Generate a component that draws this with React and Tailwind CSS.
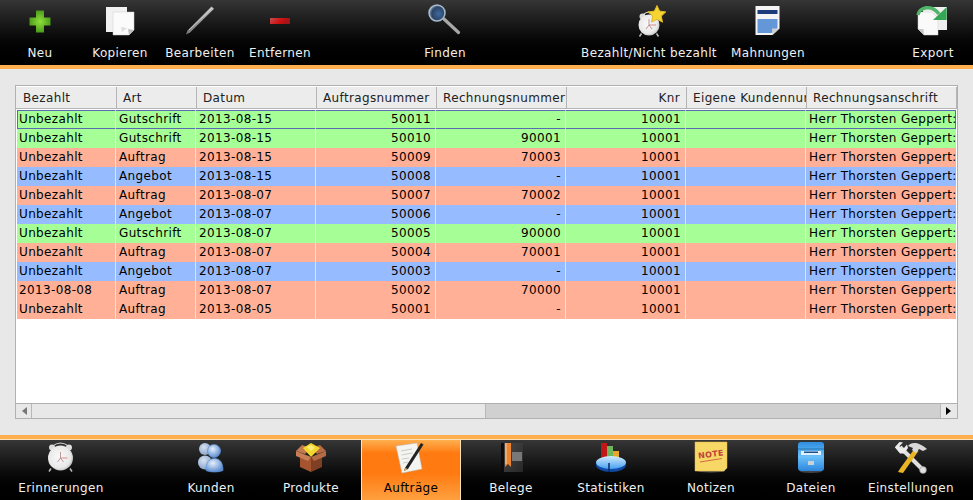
import React from "react";

const columns = [
  { name: "Bezahlt", width: "w-[100px]", rowWidth: "w-[99px]" },
  { name: "Art", width: "w-[80px]" },
  { name: "Datum", width: "w-[120px]" },
  { name: "Auftragsnummer", width: "w-[120px]", right: true },
  { name: "Rechnungsnummer", width: "w-[130px]", right: true },
  { name: "Knr", width: "w-[120px]", right: true, headRight: true },
  { name: "Eigene Kundennummer", width: "w-[120px]" },
  { name: "Rechnungsanschrift", width: "flex-1" },
];

const address = "Herr Thorsten Geppert:";

const rows = [
  ["Unbezahlt", "Gutschrift", "2013-08-15", "50011", "-"],
  ["Unbezahlt", "Gutschrift", "2013-08-15", "50010", "90001"],
  ["Unbezahlt", "Auftrag", "2013-08-15", "50009", "70003"],
  ["Unbezahlt", "Angebot", "2013-08-15", "50008", "-"],
  ["Unbezahlt", "Auftrag", "2013-08-07", "50007", "70002"],
  ["Unbezahlt", "Angebot", "2013-08-07", "50006", "-"],
  ["Unbezahlt", "Gutschrift", "2013-08-07", "50005", "90000"],
  ["Unbezahlt", "Auftrag", "2013-08-07", "50004", "70001"],
  ["Unbezahlt", "Angebot", "2013-08-07", "50003", "-"],
  ["2013-08-08", "Auftrag", "2013-08-07", "50002", "70000"],
  ["Unbezahlt", "Auftrag", "2013-08-05", "50001", "-"],
];

const rowColors = {
  Gutschrift: "bg-[#a6ff96]",
  Auftrag: "bg-[#ffb096]",
  Angebot: "bg-[#96bcff]",
};

function Icon({ children }) {
  return (
    <svg width="36" height="36" viewBox="0 0 36 36" className="block shrink-0">
      {children}
    </svg>
  );
}

function PlusIcon() {
  return (
    <Icon>
      <defs>
        <radialGradient id="plusG" cx="0.5" cy="0.5" r="0.6">
          <stop offset="0" stopColor="#8fe03a" />
          <stop offset="1" stopColor="#3f8f16" />
        </radialGradient>
      </defs>
      <path d="M14 7.5h8v7h6.5v8H22v7h-8v-7H7.5v-8H14z" fill="url(#plusG)" />
    </Icon>
  );
}

function CopyIcon() {
  return (
    <Icon>
      <path d="M4 4h21v25H4z" fill="#f1f1f1" />
      <path d="M11 9h21v18l-5 5H11z" fill="#fbfbfb" stroke="#cfcfcf" strokeWidth="0.5" />
      <path d="M27 32l-1-6 6 1z" fill="#bdbdbd" />
      <path d="M20 29l-1-5 6 1z" fill="#dedede" />
    </Icon>
  );
}

function PenIcon() {
  return (
    <Icon>
      <defs>
        <linearGradient id="penG" x1="0" y1="1" x2="1" y2="0">
          <stop offset="0" stopColor="#777" />
          <stop offset="1" stopColor="#c4c4c4" />
        </linearGradient>
      </defs>
      <path d="M4 31.5l1.5-4L29.5 3.5 32 5.8 8 29.5z" fill="url(#penG)" />
      <path d="M7 27L30 5" stroke="#e4e4e4" strokeWidth="0.7" />
    </Icon>
  );
}

function MinusIcon() {
  return (
    <Icon>
      <defs>
        <linearGradient id="minusG" x1="0" y1="0" x2="1" y2="0.3">
          <stop offset="0" stopColor="#c25050" />
          <stop offset="0.6" stopColor="#d01010" />
          <stop offset="1" stopColor="#a01515" />
        </linearGradient>
      </defs>
      <rect x="8" y="15" width="20" height="6" fill="url(#minusG)" />
    </Icon>
  );
}

function SearchIcon() {
  return (
    <Icon>
      <defs>
        <radialGradient id="lensG" cx="0.6" cy="0.55" r="0.6">
          <stop offset="0" stopColor="#3f6a9c" />
          <stop offset="0.7" stopColor="#2c4468" />
          <stop offset="1" stopColor="#8fa6bd" />
        </radialGradient>
      </defs>
      <path d="M17 16l14.5 13.5" stroke="#a8a8a8" strokeWidth="3.2" strokeLinecap="round" />
      <circle cx="10" cy="10" r="8" fill="url(#lensG)" stroke="#a9bccb" strokeWidth="1.5" />
    </Icon>
  );
}

function ClockBody({ id, cx, cy, r }) {
  const arcY = cy - r + 2;
  return (
    <>
      <defs>
        <radialGradient id={id} cx="0.45" cy="0.45" r="0.6">
          <stop offset="0" stopColor="#fafafa" />
          <stop offset="0.75" stopColor="#e8e8e8" />
          <stop offset="1" stopColor="#b4b4b4" />
        </radialGradient>
      </defs>
      <path
        d={`M${cx - r + 4} ${arcY}Q${cx} ${arcY - 7} ${cx + r - 4} ${arcY}`}
        fill="none"
        stroke="#d8d8d8"
        strokeWidth="1.2"
      />
      <circle cx={cx - r + 4} cy={arcY + 1} r="3" fill="#dcdcdc" />
      <circle cx={cx + r - 4} cy={arcY + 1} r="3" fill="#dcdcdc" />
      <path d={`M${cx - r + 3} ${cy + r - 1}l-2 3M${cx + r - 3} ${cy + r - 1}l2 3`} stroke="#bbb" strokeWidth="1.5" />
      <circle cx={cx} cy={cy + 1} r={r} fill={`url(#${id})`} />
      <path
        d={`M${cx} ${cy + 1}v-6M${cx} ${cy + 1}l-3 4M${cx} ${cy + 1}l3 4`}
        stroke="#a67070"
        strokeWidth="0.7"
        fill="none"
      />
      <path d={`M${cx} ${cy + 1}h7`} stroke="#d06060" strokeWidth="0.7" />
    </>
  );
}

function PaidIcon() {
  return (
    <Icon>
      <ClockBody id="paidClock" cx={18} cy={21} r={10.5} />
      <path
        d="M26 2.5l2.6 5.6 6.2.8-4.5 4.2 1.2 6.1-5.5-3-5.5 3 1.2-6.1-4.5-4.2 6.2-.8z"
        fill="#f6d531"
        stroke="#e0b828"
        strokeWidth="1"
        strokeLinejoin="round"
      />
    </Icon>
  );
}

function DunningIcon() {
  return (
    <Icon>
      <path d="M5.5 3h24v22.5L22.5 32h-17z" fill="#f4f4f4" />
      <rect x="7.5" y="7" width="20" height="4" fill="#1d3a7a" />
      <path d="M7.5 16h20v9l-6 5h-14z" fill="#6497d8" />
      <path d="M22.5 32l-.5-6.5h7.5z" fill="#d0d0d0" />
    </Icon>
  );
}

function ExportIcon() {
  return (
    <Icon>
      <rect x="8" y="4" width="24" height="23" fill="#efefef" />
      <path d="M3 9h14l6 6v17H9l-6-6z" fill="#fafafa" stroke="#cfcfcf" strokeWidth="0.5" />
      <path d="M9 32l-.5-6H3z" fill="#c8c8c8" />
      <path d="M3 12C4 4 17 1 24 11" fill="none" stroke="#4fb56a" strokeWidth="3.5" />
      <path d="M31.7 4v13H18z" fill="#35a653" />
    </Icon>
  );
}

function AlarmIcon() {
  return (
    <Icon>
      <ClockBody id="alarmClock" cx={17.5} cy={17} r={12.5} />
    </Icon>
  );
}

function CustomersIcon() {
  return (
    <Icon>
      <defs>
        <radialGradient id="userG" cx="0.4" cy="0.35" r="0.7">
          <stop offset="0" stopColor="#e6effc" />
          <stop offset="1" stopColor="#5487cc" />
        </radialGradient>
        <radialGradient id="userB" cx="0.4" cy="0.35" r="0.75">
          <stop offset="0" stopColor="#d6e2f2" />
          <stop offset="1" stopColor="#7f9cc4" />
        </radialGradient>
      </defs>
      <circle cx="12" cy="9" r="6" fill="url(#userB)" />
      <ellipse cx="12" cy="22.5" rx="7" ry="7" fill="url(#userB)" />
      <circle cx="21" cy="11" r="6.5" fill="url(#userG)" stroke="#5f90d4" strokeWidth="0.7" />
      <path d="M13 30.5c0-8 3-12 8.5-12s8.5 4 8.5 12c-5 2-12 2-17 0z" fill="url(#userG)" stroke="#5f90d4" strokeWidth="0.7" />
    </Icon>
  );
}

function ProductsIcon() {
  return (
    <Icon>
      <path d="M18 8l9-3 6 6-9 3z" fill="#b86a42" />
      <path d="M18 8L9 5 3 11l9 3z" fill="#c47a50" />
      <path d="M10 8l8-5 9 5-9 9z" fill="#f3d62b" />
      <path d="M14 7l4-2 4 3-4 3z" fill="#fbee78" />
      <path d="M7 15l11 3v14L7 27z" fill="#a4552f" />
      <path d="M29 15l-11 3v14l11-5z" fill="#7f3f22" />
      <path d="M3 11l15 6-3 4-12-5z" fill="#c97f55" />
      <path d="M33 11l-15 6 3 4 12-5z" fill="#b56c44" />
    </Icon>
  );
}

function OrdersIcon() {
  return (
    <Icon>
      <path d="M3 6L24 3l5 26-20 4z" fill="#f4f4f0" stroke="#bbb" strokeWidth="0.5" />
      <path d="M8 11l11-2M8.5 15l11-2M9 19l7-1M10 23l5-1" stroke="#b8b8b8" strokeWidth="0.7" />
      <path d="M12 28L28 3l2.5 1.5L15 29l-4 2z" fill="#222" />
      <path d="M11 31l1-3 3 1z" fill="#d8b060" />
    </Icon>
  );
}

function ReceiptsIcon() {
  return (
    <Icon>
      <defs>
        <linearGradient id="bookG" x1="0" y1="0" x2="1" y2="1">
          <stop offset="0" stopColor="#4a4a4a" />
          <stop offset="1" stopColor="#272727" />
        </linearGradient>
      </defs>
      <rect x="9" y="3" width="21" height="29" fill="url(#bookG)" />
      <rect x="8" y="3" width="3" height="29" fill="#0c0c0c" />
      <rect x="19" y="12" width="10" height="9" fill="#787878" />
      <path d="M12 3h6v24l-3-3-3 3z" fill="#e88432" />
      <rect x="12" y="3" width="2" height="21" fill="#f1a868" />
    </Icon>
  );
}

function StatsIcon() {
  return (
    <Icon>
      <defs>
        <linearGradient id="pieG" x1="0" y1="0" x2="0" y2="1">
          <stop offset="0" stopColor="#d4ecfd" />
          <stop offset="1" stopColor="#46a0f0" />
        </linearGradient>
      </defs>
      <rect x="8" y="3" width="6" height="15" fill="#c01818" />
      <rect x="14" y="6" width="6" height="13" fill="#6db65c" />
      <rect x="20" y="11" width="6" height="8" fill="#e8a52a" />
      <ellipse cx="18" cy="25" rx="15" ry="7" fill="#0f4aa6" />
      <ellipse cx="18" cy="22.5" rx="15" ry="6.5" fill="url(#pieG)" />
      <path d="M16 23v9" stroke="#0a2a66" strokeWidth="1.5" />
    </Icon>
  );
}

function NotesIcon() {
  return (
    <Icon>
      <ellipse cx="18" cy="31" rx="14" ry="1.5" fill="#555" />
      <path d="M2 2h32v26l-3 3H2z" fill="#f7d765" stroke="#e0b83c" strokeWidth="0.5" />
      <text x="18" y="17" textAnchor="middle" fontSize="8" fontWeight="700" fill="#c0413a" transform="rotate(-7 18 15)">
        NOTE
      </text>
      <path d="M7 22l22-3.5" stroke="#cf5a45" strokeWidth="0.9" />
    </Icon>
  );
}

function FilesIcon() {
  return (
    <Icon>
      <defs>
        <linearGradient id="fileG" x1="0" y1="0" x2="0" y2="1">
          <stop offset="0" stopColor="#2f8de0" />
          <stop offset="0.5" stopColor="#6cc0fa" />
          <stop offset="1" stopColor="#2c87dc" />
        </linearGradient>
      </defs>
      <ellipse cx="18" cy="31.5" rx="11" ry="1.5" fill="#444" />
      <rect x="5" y="2" width="26" height="29" rx="3" fill="url(#fileG)" />
      <path d="M5 9h26" stroke="#18649f" strokeWidth="0.8" />
      <rect x="8" y="11" width="20" height="4" fill="#dff1ff" />
      <rect x="11" y="11.5" width="14" height="1.5" fill="#1f4f85" />
      <rect x="15" y="21" width="6" height="4" fill="#c6d2da" />
    </Icon>
  );
}

function SettingsIcon() {
  return (
    <Icon>
      <path d="M7 7l23 23" stroke="#e0e0e0" strokeWidth="4" />
      <path d="M2 7l4.5-5 3.5.5-3.5 3.5 1.5 3 3-1 3-3.5 1 3.5-4 5.5-4 0-5-6z" fill="#ececec" />
      <circle cx="30" cy="30" r="3.4" fill="#e0e0e0" stroke="#8a8a8a" strokeWidth="0.6" />
      <path d="M5 32l2.5-4L22 8l3.5 3L10 33z" fill="#e9b524" />
      <path d="M15 6c3-4 10-5 19 3l-4 2-4-2-3 4-4-3 1-2z" fill="#d8d8d8" />
    </Icon>
  );
}

const topLeft = [
  { label: "Neu", icon: <PlusIcon /> },
  { label: "Kopieren", icon: <CopyIcon /> },
  { label: "Bearbeiten", icon: <PenIcon /> },
  { label: "Entfernen", icon: <MinusIcon /> },
];

const bottomTabs = [
  { label: "Kunden", icon: <CustomersIcon /> },
  { label: "Produkte", icon: <ProductsIcon /> },
  { label: "Aufträge", icon: <OrdersIcon />, active: true },
  { label: "Belege", icon: <ReceiptsIcon /> },
  { label: "Statistiken", icon: <StatsIcon /> },
  { label: "Notizen", icon: <NotesIcon /> },
  { label: "Dateien", icon: <FilesIcon /> },
  { label: "Einstellungen", icon: <SettingsIcon /> },
];

function ToolButton({ label, icon, className = "w-20" }) {
  return (
    <div className={`flex flex-col items-center pt-[3px] shrink-0 ${className}`}>
      {icon}
      <span className="mt-[6px] h-4 leading-4 whitespace-nowrap text-[#f0f0f0]">{label}</span>
    </div>
  );
}

function BottomTab({ label, icon, active }) {
  return (
    <div
      className={`flex flex-col items-center w-[100px] shrink-0 ${
        active
          ? "border-x border-[#ffe0b8] bg-[linear-gradient(#ffb050_0%,#ff7a10_22%,#ff7a10_55%,#ffa040_100%)] text-black"
          : "text-[#f0f0f0]"
      }`}
    >
      {icon}
      <span className="mt-[4px] h-4 leading-4 whitespace-nowrap">{label}</span>
    </div>
  );
}

function HeaderCell({ col }) {
  return (
    <div
      className={`${col.width} shrink-0 overflow-hidden whitespace-nowrap border-r border-[#b4b4b4] px-[6px] leading-[22px] text-[#222] ${
        col.headRight ? "text-right" : "text-left"
      }`}
    >
      {col.name}
    </div>
  );
}

function Row({ row, selected }) {
  const cells = [...row, "10001", "", address];
  return (
    <div
      className={`flex h-[19px] relative ${rowColors[row[1]]} ${
        selected ? "shadow-[inset_0_0_0_1px_#5a6cb0]" : ""
      }`}
    >
      {cells.map((text, i) => (
        <div
          key={i}
          className={`${columns[i].rowWidth || columns[i].width} shrink-0 overflow-hidden whitespace-nowrap border-r border-white/60 leading-[18px] ${
            columns[i].right ? "text-right pr-[4px]" : "text-left"
          } ${i === 0 ? "pl-[2px]" : "pl-[3px]"} ${i === 7 ? "border-r-0" : ""}`}
        >
          {text}
        </div>
      ))}
    </div>
  );
}

export default function App() {
  return (
    <div className="flex h-screen w-full flex-col overflow-hidden bg-[#e8e8e8] font-['DejaVu_Sans',sans-serif] text-[12px] tracking-[0.36px] text-black">
      <div className="flex h-[69px] shrink-0 border-b-4 border-[#ffae50] bg-gradient-to-b from-[#363636] to-black">
        {topLeft.map((item) => (
          <ToolButton key={item.label} {...item} />
        ))}
        <ToolButton label="Finden" icon={<SearchIcon />} className="ml-[85px] w-20" />
        <ToolButton label="Bezahlt/Nicht bezahlt" icon={<PaidIcon />} className="ml-[94px] w-[140px]" />
        <ToolButton label="Mahnungen" icon={<DunningIcon />} className="ml-[4px] w-[90px]" />
        <ToolButton label="Export" icon={<ExportIcon />} className="ml-auto w-20" />
      </div>

      <div className="flex min-h-0 flex-1 flex-col px-[15px] py-[16px]">
        <div className="flex min-h-0 flex-1 flex-col border border-[#b0b0b0] bg-white">
          <div className="flex h-[23px] shrink-0 border-y border-t-white border-b-[#b4b4b4] bg-[#ececec] pl-px">
            {columns.map((col) => (
              <HeaderCell key={col.name} col={col} />
            ))}
          </div>
          <div className="min-h-0 flex-1 overflow-hidden px-px pt-px">
            {rows.map((row, i) => (
              <Row key={row[3]} row={row} selected={i === 0} />
            ))}
          </div>
          <div className="flex h-[15px] shrink-0 border-t border-[#b0b0b0] bg-[#e8e8e8] pl-px pr-[2px]">
            <div className="flex w-[15px] items-center justify-center border-r border-[#b8b8b8]">
              <span className="h-0 w-0 border-y-[4px] border-r-[5px] border-y-transparent border-r-[#777]" />
            </div>
            <div className="w-[454px] border-r border-[#b8b8b8]" />
            <div className="flex-1 bg-[#d0d0d0]" />
            <div className="flex w-[15px] items-center justify-center border-l border-[#b8b8b8]">
              <span className="h-0 w-0 border-y-[4px] border-l-[5px] border-y-transparent border-l-black" />
            </div>
          </div>
        </div>
      </div>

      <div className="h-1 shrink-0 bg-[#ffae50]" />
      <div className="flex h-[61px] shrink-0 border-t border-[#ffe0b8] bg-gradient-to-b from-[#363636] to-black px-[11px]">
        <BottomTab label="Erinnerungen" icon={<AlarmIcon />} />
        <div className="w-[50px] shrink-0" />
        {bottomTabs.map((tab) => (
          <BottomTab key={tab.label} {...tab} />
        ))}
      </div>
    </div>
  );
}
